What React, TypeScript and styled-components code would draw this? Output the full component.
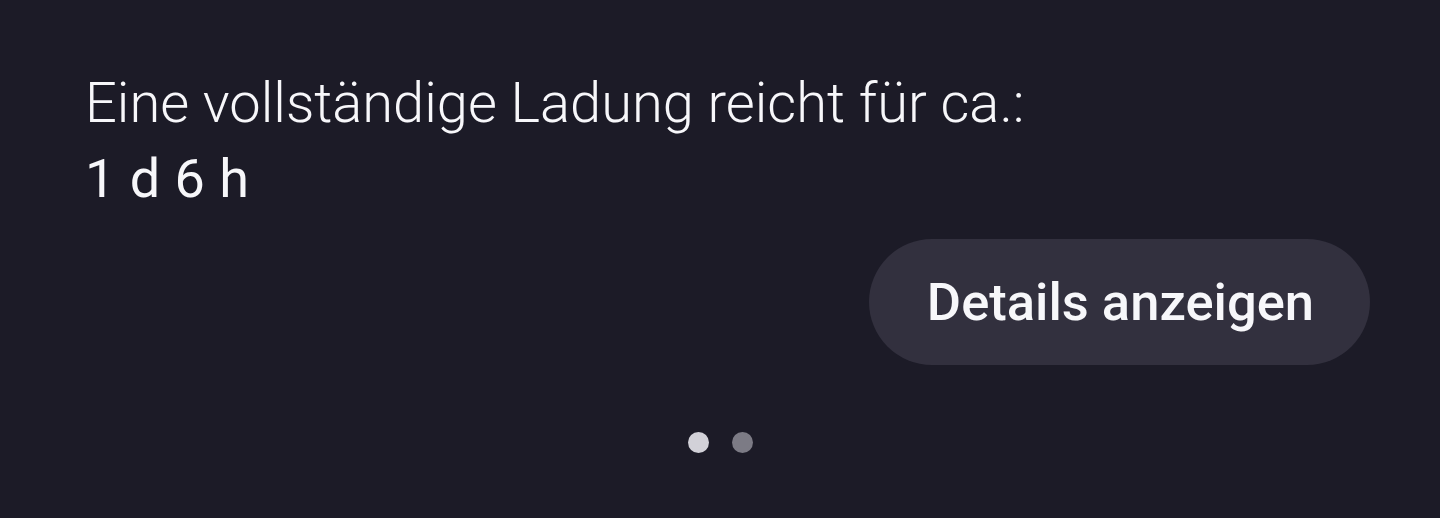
import React from 'react'
import styled, { createGlobalStyle } from 'styled-components'

const GlobalStyle = createGlobalStyle`
  html, body {
    margin: 0;
    padding: 0;
    background: #1c1b27;
  }
`

const App = () => {
  return (
    <>
      <GlobalStyle />
      <Card>
        <Summary>
          <Label>Eine vollständige Ladung reicht für ca.:</Label>
          <Value>1 d 6 h</Value>
        </Summary>
        <Actions>
          <DetailsButton>Details anzeigen</DetailsButton>
        </Actions>
        <Pager>
          <Dot active />
          <Dot />
        </Pager>
      </Card>
    </>
  )
}

const Card = styled.div`
  width: 1440px;
  height: 518px;
  box-sizing: border-box;
  background: #1c1b27;
  padding: 66px 70px 0 85px;
  display: flex;
  flex-direction: column;
  font-family: Roboto, 'Liberation Sans', sans-serif;
  color: #f7f7fa;
`

const Summary = styled.div`
  display: flex;
  flex-direction: column;
`

const Label = styled.div`
  font-size: 56px;
  font-weight: 300;
  line-height: 75px;
`

const Value = styled.div`
  font-size: 54px;
  font-weight: 400;
  line-height: 75px;
  letter-spacing: 0.5px;
`

const Actions = styled.div`
  display: flex;
  justify-content: flex-end;
  margin-top: 23px;
`

const DetailsButton = styled.button`
  height: 126px;
  padding: 0 56px 0 58px;
  border: none;
  border-radius: 63px;
  background: #32303e;
  color: #f7f7fa;
  font-family: inherit;
  font-size: 52.5px;
  font-weight: 500;
  cursor: pointer;
`

const Pager = styled.div`
  display: flex;
  justify-content: center;
  gap: 23px;
  margin-top: 67px;
  margin-left: -14px;
`

const Dot = styled.span<{ active?: boolean }>`
  width: 21px;
  height: 21px;
  border-radius: 50%;
  background: ${p => (p.active ? '#d2d1d8' : '#7c7b85')};
`

export default App
